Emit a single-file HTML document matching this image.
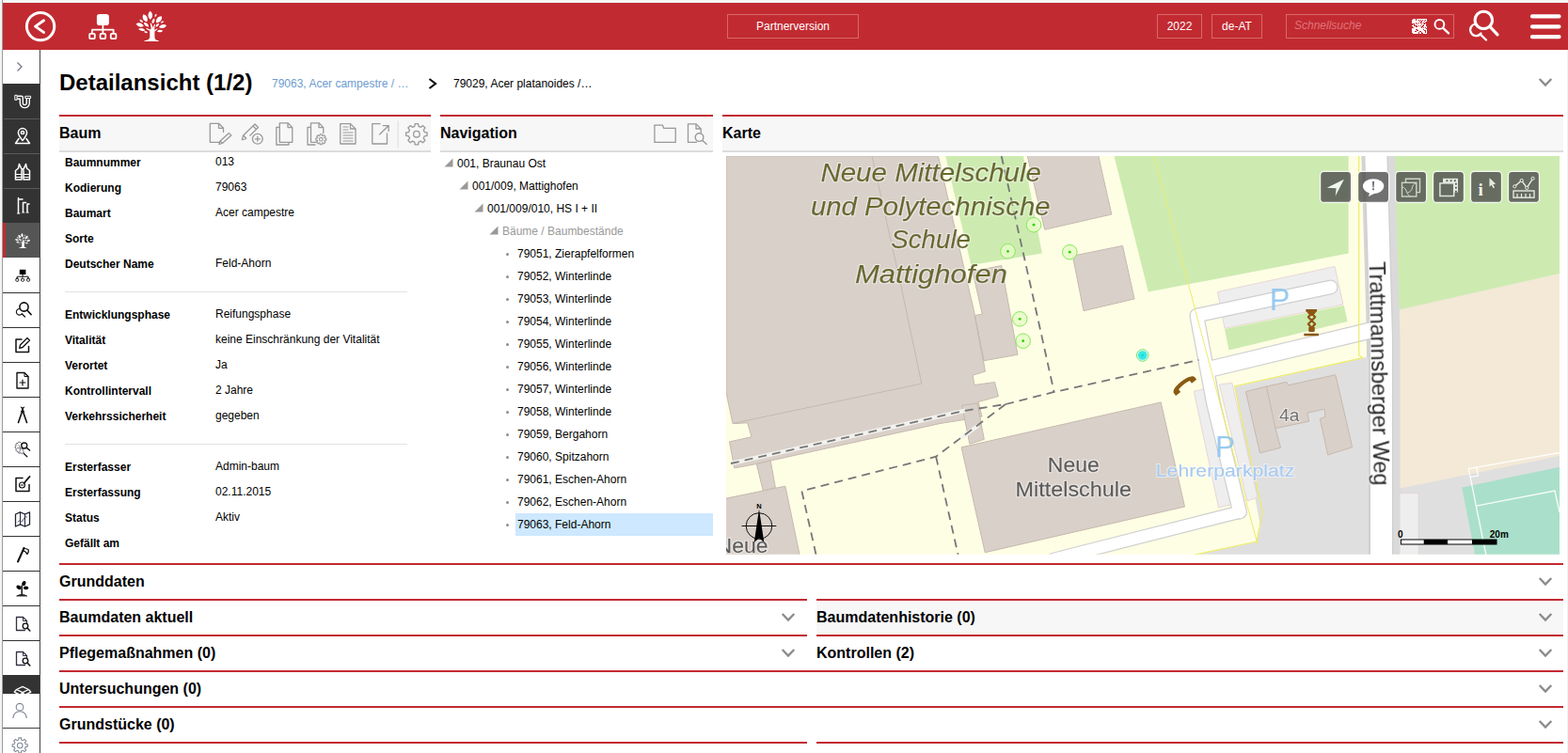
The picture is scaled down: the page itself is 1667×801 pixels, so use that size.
<!DOCTYPE html>
<html lang="de">
<head>
<meta charset="utf-8">
<title>Detailansicht</title>
<style>
*{box-sizing:border-box;margin:0;padding:0}
html,body{width:1667px;height:801px;overflow:hidden;background:#fff}
body{position:relative;font-family:"Liberation Sans",Arial,sans-serif;font-size:12px;color:#000}
.abs{position:absolute}
#edgeT{left:0;top:0;width:1667px;height:3px;background:linear-gradient(#f4f4f4,#fafafa 60%,#e6ecec)}
#edgeL{left:0;top:0;width:3px;height:801px;background:linear-gradient(90deg,#f1f1f1,#f6f6f6 60%,#9b9b9b 67%,#9b9b9b)}
#hdr{left:3px;top:3px;width:1664px;height:50px;background:#c22a31}
.hbtn{position:absolute;border:1px solid #d9686c;color:#fff;font-size:12px;text-align:center;line-height:24px;height:26px}
#side{left:3px;top:53px;width:40px;height:748px;border-right:1px solid #3a3a3a;background:#fff}
.si{position:absolute;left:0;width:39px;height:37px;border-bottom:1px solid #555}
.si.d{background:#333;border-bottom:1px solid #555}
.si.w{background:#fff;border-bottom:1px solid #333}
.si svg{position:absolute;left:0;top:0}
h1{position:absolute;left:63px;top:73px;font-size:24px;line-height:30px;font-weight:bold;white-space:nowrap}
.ph{position:absolute;height:40px;border-top:2px solid #c22a31;border-bottom:2px solid #dcdcdc;background:#f7f7f7}
.ph b{position:absolute;left:0;top:8px;font-size:16px;line-height:20px;white-space:nowrap}
.lb{position:absolute;left:69px;font-weight:bold;white-space:nowrap;line-height:14px}
.vl{position:absolute;left:229px;white-space:nowrap;line-height:14px}
.sep{position:absolute;left:69px;width:364px;height:1px;background:#e2e2e2}
.tr{position:absolute;white-space:nowrap;line-height:14px}
.acc{position:absolute;height:38px;border-top:2px solid #c22a31}
.acc b{position:absolute;left:0;top:8px;font-size:16px;line-height:20px;white-space:nowrap}
.chev{position:absolute;width:14px;height:9px}
</style>
</head>
<body>
<div id="edgeT" class="abs"></div>
<div id="hdr" class="abs">
<svg class="abs" style="left:0;top:0" width="1664" height="50" viewBox="3 3 1664 50">
<g fill="none" stroke="#fff" stroke-linecap="round" stroke-linejoin="round">
<circle cx="43.1" cy="28.1" r="14.7" stroke-width="3"/>
<path d="M46.5 21.8 L37.6 28.1 L46.5 34.4" stroke-width="3"/>
<g stroke-width="1.8" stroke-linecap="butt">
<path d="M109.4 26v9.5M98 35.5v-3.8h22.6v3.8"/>
<rect x="95.2" y="35.9" width="5.6" height="5.2" rx="0.8"/>
<rect x="106.6" y="35.9" width="5.6" height="5.2" rx="0.8"/>
<rect x="117.8" y="35.9" width="5.6" height="5.2" rx="0.8"/>
</g>
</g>
<rect x="102.9" y="15" width="13" height="12" rx="2.8" fill="#fff"/>
<!-- tree -->
<g fill="#fff">
<path d="M153.500 44 L168.800 44 L168.800 43.200 C165.500 42.800 164.500 41.500 164.400 39 L164.400 33.500 L167.500 31 L167 30.300 L164.300 32 L164.300 29 L165 26 L164 25.700 L162.800 29.500 L160.600 24.500 L159.600 24.800 L160.800 30 L159.800 31.500 L155.800 29.800 L155.400 30.700 L159.300 33 L159.300 39 C159.200 41.500 157.500 42.800 153.500 43.200 Z"/>
<path transform="translate(159.75 16.25) rotate(0)" d="M0 -4.50 C3.00 -2.02 3.00 2.02 0 4.50 C-3.00 2.02 -3.00 -2.02 0 -4.50 Z"/>
<path transform="translate(154.25 19.25) rotate(-25)" d="M0 -4.40 C3.12 -1.98 3.12 1.98 0 4.40 C-3.12 1.98 -3.12 -1.98 0 -4.40 Z"/>
<path transform="translate(169.00 20.75) rotate(40)" d="M0 -4.50 C3.12 -2.02 3.12 2.02 0 4.50 C-3.12 2.02 -3.12 -2.02 0 -4.50 Z"/>
<path transform="translate(165.50 16.50) rotate(25)" d="M0 -1.80 C1.12 -0.81 1.12 0.81 0 1.80 C-1.12 0.81 -1.12 -0.81 0 -1.80 Z"/>
<path transform="translate(163.00 22.25) rotate(20)" d="M0 -3.00 C1.75 -1.35 1.75 1.35 0 3.00 C-1.75 1.35 -1.75 -1.35 0 -3.00 Z"/>
<path transform="translate(150.25 22.25) rotate(-50)" d="M0 -2.40 C1.38 -1.08 1.38 1.08 0 2.40 C-1.38 1.08 -1.38 -1.08 0 -2.40 Z"/>
<path transform="translate(148.75 26.50) rotate(-72)" d="M0 -4.20 C2.62 -1.89 2.62 1.89 0 4.20 C-2.62 1.89 -2.62 -1.89 0 -4.20 Z"/>
<path transform="translate(155.50 26.25) rotate(-50)" d="M0 -3.40 C2.00 -1.53 2.00 1.53 0 3.40 C-2.00 1.53 -2.00 -1.53 0 -3.40 Z"/>
<path transform="translate(173.00 28.00) rotate(75)" d="M0 -4.20 C2.62 -1.89 2.62 1.89 0 4.20 C-2.62 1.89 -2.62 -1.89 0 -4.20 Z"/>
<path transform="translate(172.50 23.50) rotate(65)" d="M0 -1.80 C1.12 -0.81 1.12 0.81 0 1.80 C-1.12 0.81 -1.12 -0.81 0 -1.80 Z"/>
<path transform="translate(167.25 26.75) rotate(40)" d="M0 -2.60 C1.50 -1.17 1.50 1.17 0 2.60 C-1.50 1.17 -1.50 -1.17 0 -2.60 Z"/>
<path transform="translate(150.75 31.50) rotate(-80)" d="M0 -3.60 C1.88 -1.62 1.88 1.62 0 3.60 C-1.88 1.62 -1.88 -1.62 0 -3.60 Z"/>
<path transform="translate(170.00 33.00) rotate(85)" d="M0 -3.20 C1.75 -1.44 1.75 1.44 0 3.20 C-1.75 1.44 -1.75 -1.44 0 -3.20 Z"/>
<path transform="translate(155.00 34.25) rotate(-75)" d="M0 -2.00 C1.12 -0.90 1.12 0.90 0 2.00 C-1.12 0.90 -1.12 -0.90 0 -2.00 Z"/>
</g>
<!-- small search -->
<g fill="none" stroke="#fff" stroke-linecap="round">
<circle cx="1530.4" cy="25.900" r="4.900" stroke-width="2"/>
<path d="M1534.200 29.800 L1540 35.400" stroke-width="2.300"/>
<circle cx="1577.300" cy="21.400" r="9.200" stroke-width="3"/>
<path d="M1584 28.400 L1592 36.800" stroke-width="3.200"/>
<path d="M1568.800 25.500 A6.300 6.300 0 1 0 1574.500 35.500" stroke-width="2.200"/>
<path d="M1573.600 36.400 L1580 42.500" stroke-width="2.400"/>
<path d="M1629 17.400h28.500M1629 28.300h28.500M1629 39.200h28.500" stroke-width="4.200"/>
</g>
<!-- qr -->
<g id="qr"><rect x="1501" y="20" width="16" height="16" fill="#fff"/>
<g fill="#c22a31"><rect x="1501" y="20" width="1" height="1"/><rect x="1501" y="25" width="1" height="1"/><rect x="1501" y="26" width="1" height="1"/><rect x="1501" y="28" width="1" height="1"/><rect x="1501" y="29" width="1" height="1"/><rect x="1501" y="35" width="1" height="1"/><rect x="1502" y="25" width="1" height="1"/><rect x="1502" y="29" width="1" height="1"/><rect x="1503" y="25" width="1" height="1"/><rect x="1503" y="26" width="1" height="1"/><rect x="1503" y="27" width="1" height="1"/><rect x="1504" y="27" width="1" height="1"/><rect x="1504" y="33" width="1" height="1"/><rect x="1505" y="20" width="1" height="1"/><rect x="1505" y="21" width="1" height="1"/><rect x="1505" y="24" width="1" height="1"/><rect x="1505" y="27" width="1" height="1"/><rect x="1505" y="28" width="1" height="1"/><rect x="1505" y="31" width="1" height="1"/><rect x="1505" y="33" width="1" height="1"/><rect x="1506" y="25" width="1" height="1"/><rect x="1506" y="27" width="1" height="1"/><rect x="1506" y="28" width="1" height="1"/><rect x="1506" y="31" width="1" height="1"/><rect x="1506" y="32" width="1" height="1"/><rect x="1507" y="32" width="1" height="1"/><rect x="1508" y="21" width="1" height="1"/><rect x="1508" y="24" width="1" height="1"/><rect x="1508" y="27" width="1" height="1"/><rect x="1508" y="34" width="1" height="1"/><rect x="1508" y="35" width="1" height="1"/><rect x="1509" y="22" width="1" height="1"/><rect x="1509" y="33" width="1" height="1"/><rect x="1510" y="21" width="1" height="1"/><rect x="1510" y="23" width="1" height="1"/><rect x="1510" y="24" width="1" height="1"/><rect x="1510" y="27" width="1" height="1"/><rect x="1510" y="33" width="1" height="1"/><rect x="1511" y="22" width="1" height="1"/><rect x="1511" y="23" width="1" height="1"/><rect x="1511" y="25" width="1" height="1"/><rect x="1511" y="28" width="1" height="1"/><rect x="1511" y="29" width="1" height="1"/><rect x="1511" y="34" width="1" height="1"/><rect x="1511" y="35" width="1" height="1"/><rect x="1512" y="21" width="1" height="1"/><rect x="1512" y="27" width="1" height="1"/><rect x="1512" y="28" width="1" height="1"/><rect x="1512" y="35" width="1" height="1"/><rect x="1513" y="24" width="1" height="1"/><rect x="1513" y="26" width="1" height="1"/><rect x="1513" y="27" width="1" height="1"/><rect x="1513" y="29" width="1" height="1"/><rect x="1513" y="31" width="1" height="1"/><rect x="1514" y="22" width="1" height="1"/><rect x="1514" y="24" width="1" height="1"/><rect x="1514" y="25" width="1" height="1"/><rect x="1514" y="32" width="1" height="1"/><rect x="1515" y="21" width="1" height="1"/><rect x="1515" y="24" width="1" height="1"/><rect x="1515" y="29" width="1" height="1"/><rect x="1515" y="32" width="1" height="1"/><rect x="1515" y="33" width="1" height="1"/><rect x="1515" y="34" width="1" height="1"/><rect x="1516" y="23" width="1" height="1"/><rect x="1516" y="24" width="1" height="1"/><rect x="1516" y="25" width="1" height="1"/><rect x="1516" y="26" width="1" height="1"/><rect x="1516" y="27" width="1" height="1"/><rect x="1516" y="30" width="1" height="1"/></g></g>
</svg>
<div class="hbtn" style="left:770px;top:12px;width:140px">Partnerversion</div>
<div class="hbtn" style="left:1227px;top:12px;width:48px">2022</div>
<div class="hbtn" style="left:1285px;top:12px;width:54px">de-AT</div>
<div class="hbtn" style="left:1364px;top:12px;width:179px;text-align:left;padding-left:8px;line-height:22px;font-style:italic;color:#df7378">Schnellsuche</div>
</div>
<div id="edgeL" class="abs"></div>
<div id="edgeR" class="abs" style="left:1666px;top:53px;width:1px;height:748px;background:#f1f1f1"></div>
<div id="side" class="abs" style="display:none"></div>
<svg class="abs" style="left:0;top:53px" width="43" height="748" viewBox="0 53 43 748">
<rect x="3" y="53" width="39" height="36" fill="#fff"/>
<rect x="3" y="89" width="39" height="148" fill="#333"/>
<rect x="3" y="237" width="39" height="37" fill="#555"/>
<rect x="3" y="237" width="3" height="37" fill="#c22a31"/>
<rect x="3" y="718" width="39" height="20" fill="#333"/>
<rect x="42" y="53" width="1" height="748" fill="#444"/>
<rect x="4" y="126" width="38" height="1" fill="#5a5a5a"/>
<rect x="4" y="163" width="38" height="1" fill="#5a5a5a"/>
<rect x="4" y="200" width="38" height="1" fill="#5a5a5a"/>
<rect x="3" y="311" width="39" height="1" fill="#333"/>
<rect x="3" y="348" width="39" height="1" fill="#333"/>
<rect x="3" y="385" width="39" height="1" fill="#333"/>
<rect x="3" y="422" width="39" height="1" fill="#333"/>
<rect x="3" y="459" width="39" height="1" fill="#333"/>
<rect x="3" y="496" width="39" height="1" fill="#333"/>
<rect x="3" y="533" width="39" height="1" fill="#333"/>
<rect x="3" y="570" width="39" height="1" fill="#333"/>
<rect x="3" y="607" width="39" height="1" fill="#333"/>
<rect x="3" y="644" width="39" height="1" fill="#333"/>
<rect x="3" y="681" width="39" height="1" fill="#333"/>
<rect x="3" y="718" width="39" height="1" fill="#333"/>
<rect x="3" y="774" width="39" height="1" fill="#444"/>
<path d="M18.500 66.500 L23 71 L18.500 75.500" fill="none" stroke="#778" stroke-width="1.300"/>
<g fill="none" stroke="#fff" stroke-width="1.500" stroke-linecap="round" stroke-linejoin="round">
<g stroke-linecap="butt"><path d="M18.300 103.800H22.800V109.600A3.500 3.500 0 0 0 29.800 109.600V104.600" stroke-width="4.400"/><path d="M18.300 103.800H22.800V109.600A3.500 3.500 0 0 0 29.800 109.600V104.600" stroke="#333" stroke-width="1.600"/><rect x="15.800" y="101.300" width="2.300" height="5" fill="#333" stroke-width="1"/><rect x="26.800" y="102.300" width="5.800" height="2.200" fill="#333" stroke-width="1"/></g>
<path d="M24 149.500c-3.200-4-4.600-6.200-4.600-8.300a4.600 4.600 0 0 1 9.200 0c0 2.100-1.400 4.300-4.600 8.300z"/><circle cx="24" cy="141" r="1.600"/><path d="M20 147.500l-3.500 5h15l-3.500-5"/>
<path d="M20.500 174.500l-1 4.500-3 2.500v9.500h6.500v-9.500l1-2 1 2v9.500h6.500v-9.500l-3-2.500-1-4.500-2.500 5.500h-2z"/><path d="M16.500 185.500h6.500M16.500 188.500h6.500M25 185.500h6.500M25 188.500h6.500" stroke-width="1.100"/>
<path d="M19.500 226.500v-14.500h4.500M19.500 212v-1.500M24.500 225.500v-10h3M29 225.500v-8.500h2" /><path d="M18.500 227h2.500M23.800 226h2M28.200 226h2" stroke-width="1.200"/>
</g>
<g fill="#fff" transform="translate(16.100 248) scale(0.500) translate(-145 -12)"><path d="M153.500 44 L168.800 44 L168.800 43.200 C165.500 42.800 164.500 41.500 164.400 39 L164.400 33.500 L167.500 31 L167 30.300 L164.300 32 L164.300 29 L165 26 L164 25.700 L162.800 29.500 L160.600 24.500 L159.600 24.800 L160.800 30 L159.800 31.500 L155.800 29.800 L155.400 30.700 L159.300 33 L159.300 39 C159.200 41.500 157.500 42.800 153.500 43.200 Z"/><path transform="translate(159.75 16.25) rotate(0)" d="M0 -4.50 C3.00 -2.02 3.00 2.02 0 4.50 C-3.00 2.02 -3.00 -2.02 0 -4.50 Z"/><path transform="translate(154.25 19.25) rotate(-25)" d="M0 -4.40 C3.12 -1.98 3.12 1.98 0 4.40 C-3.12 1.98 -3.12 -1.98 0 -4.40 Z"/><path transform="translate(169.00 20.75) rotate(40)" d="M0 -4.50 C3.12 -2.02 3.12 2.02 0 4.50 C-3.12 2.02 -3.12 -2.02 0 -4.50 Z"/><path transform="translate(165.50 16.50) rotate(25)" d="M0 -1.80 C1.12 -0.81 1.12 0.81 0 1.80 C-1.12 0.81 -1.12 -0.81 0 -1.80 Z"/><path transform="translate(163.00 22.25) rotate(20)" d="M0 -3.00 C1.75 -1.35 1.75 1.35 0 3.00 C-1.75 1.35 -1.75 -1.35 0 -3.00 Z"/><path transform="translate(150.25 22.25) rotate(-50)" d="M0 -2.40 C1.38 -1.08 1.38 1.08 0 2.40 C-1.38 1.08 -1.38 -1.08 0 -2.40 Z"/><path transform="translate(148.75 26.50) rotate(-72)" d="M0 -4.20 C2.62 -1.89 2.62 1.89 0 4.20 C-2.62 1.89 -2.62 -1.89 0 -4.20 Z"/><path transform="translate(155.50 26.25) rotate(-50)" d="M0 -3.40 C2.00 -1.53 2.00 1.53 0 3.40 C-2.00 1.53 -2.00 -1.53 0 -3.40 Z"/><path transform="translate(173.00 28.00) rotate(75)" d="M0 -4.20 C2.62 -1.89 2.62 1.89 0 4.20 C-2.62 1.89 -2.62 -1.89 0 -4.20 Z"/><path transform="translate(172.50 23.50) rotate(65)" d="M0 -1.80 C1.12 -0.81 1.12 0.81 0 1.80 C-1.12 0.81 -1.12 -0.81 0 -1.80 Z"/><path transform="translate(167.25 26.75) rotate(40)" d="M0 -2.60 C1.50 -1.17 1.50 1.17 0 2.60 C-1.50 1.17 -1.50 -1.17 0 -2.60 Z"/><path transform="translate(150.75 31.50) rotate(-80)" d="M0 -3.60 C1.88 -1.62 1.88 1.62 0 3.60 C-1.88 1.62 -1.88 -1.62 0 -3.60 Z"/><path transform="translate(170.00 33.00) rotate(85)" d="M0 -3.20 C1.75 -1.44 1.75 1.44 0 3.20 C-1.75 1.44 -1.75 -1.44 0 -3.20 Z"/><path transform="translate(155.00 34.25) rotate(-75)" d="M0 -2.00 C1.12 -0.90 1.12 0.90 0 2.00 C-1.12 0.90 -1.12 -0.90 0 -2.00 Z"/></g>
<g fill="none" stroke="#111" stroke-width="1.400" stroke-linecap="round" stroke-linejoin="round">
<rect x="20.800" y="286.800" width="6.600" height="5.200" fill="#000" stroke="none"/><path d="M24.100 292v2.200M18.300 296.200v-2h11.800v2" stroke-width="1"/><rect x="16.800" y="296.200" width="3" height="3" rx="0.800" stroke-width="0.900"/><rect x="22.600" y="296.200" width="3" height="3" rx="0.800" stroke-width="0.900"/><rect x="28.600" y="296.200" width="3" height="3" rx="0.800" stroke-width="0.900"/>
<circle cx="25.500" cy="326.500" r="4.600" stroke-width="1.600"/><path d="M28.800 330l4.200 4.500" stroke-width="1.800"/><path d="M20.500 328.500a3.300 3.300 0 1 0 3 5" stroke-width="1.100"/><path d="M23.500 334l3 3" stroke-width="1.200"/>
<path d="M23 361h-6v13.500h13.500v-6" stroke-width="1.500"/><path d="M29 359.500l2.500 2.500-7.500 7.500-3.300.8.800-3.300z" stroke-width="1.300"/>
<path d="M18 396.500h8l4 4v12.500h-12z" stroke-width="1.400"/><path d="M26 396.500v4h4" stroke-width="1"/><path d="M24 404v6M21 407h6" stroke-width="1.200"/>
<path d="M24 433.500v3M24 436.500l-4.500 13M24 436.500l4.500 13" stroke-width="1.600"/><path d="M22.300 433l3.400 5M25.700 433l-3.400 5" stroke-width="1"/>
<g stroke="#4a4a55" stroke-width="0.900"><path d="M22.500 471.200c-.8-1.500-3-1.500-3.600.2-1.700-.2-2.600 1.400-1.800 2.700-1.400.8-1.300 2.800.2 3.300-.9 1.300 0 3 1.600 2.900.1 1.500 1.800 2.300 3 1.400 1 1.100 2.700.9 3.300-.3"/><path d="M20 473.500l1.800 3.500-1 3.500M22.500 472.500l1 4 1.700 4.500M18.500 476.500l3.300.5 3 .3" stroke-width="0.700"/></g><circle cx="25.800" cy="474" r="3" stroke-width="1.300" fill="#fff"/><path d="M28 476.200l3.600 2.800" stroke-width="1.500"/><path d="M25.400 482.500l3.400 3.300" stroke-width="1.200"/>
<path d="M24 508.500h-7v14h14v-7" stroke-width="1.500"/><circle cx="23.500" cy="516" r="3" stroke-width="1.100"/><path d="M22.200 516h2.600" stroke-width="1"/><path d="M25.500 514l6-7" stroke-width="1.800"/>
<path d="M16.500 547l5-2.200 5 2.200 5-2.200v13l-5 2.200-5-2.200-5 2.200z" stroke-width="1.300" stroke="#223"/><path d="M21.500 545v13M26.500 547v13" stroke-width="1" stroke="#223"/><path d="M19 555c2-3 3 2 5-1s2-5 4.500-4" stroke-width="0.900" stroke="#335"/>
<path d="M19 597.500l6.500-14.500" stroke-width="2"/><path d="M25 583l5 1.500c.8 1.800.3 3.500-1.200 5-.6-2-1.800-3-4.500-3.800z" stroke-width="1.200"/>
<path d="M23.200 632.500v-9.500" stroke-width="1.500"/><path d="M18 633.800c2.500-1.600 8-1.600 10.400 0z" fill="#000" stroke-width="0.800"/><g fill="#000" stroke="none"><ellipse cx="25.400" cy="620.600" rx="2" ry="2.700" transform="rotate(22 25.400 620.600)"/><ellipse cx="20" cy="624.800" rx="2.800" ry="2" transform="rotate(32 20 624.800)"/><ellipse cx="27.600" cy="625.400" rx="2.700" ry="1.800"/></g>
<path d="M26.500 670.500h-9v-14h7l4 4v3" stroke-width="1.300" stroke="#334"/><path d="M24.500 656.500v4h4" stroke-width="1" stroke="#334"/><circle cx="27" cy="666" r="2.800" stroke-width="1.300"/><path d="M29 668l2.800 3" stroke-width="1.500"/>
<path d="M26.500 707.500h-9v-14h7l4 4v3" stroke-width="1.300" stroke="#334"/><path d="M24.500 693.500v4h4" stroke-width="1" stroke="#334"/><circle cx="27" cy="703" r="2.800" stroke-width="1.300"/><path d="M29 705l2.800 3" stroke-width="1.500"/>
</g>
<g fill="none" stroke="#fff" stroke-width="1.300" stroke-linejoin="round"><path d="M17.500 733.500l6.500-3.200 6.500 3.200-6.500 3.200zM17.500 733.500l-2.300 2.600 6.500 3.200 2.300-2.600M30.500 733.500l2.300 2.600-6.500 3.200-2.300-2.600"/></g>
<rect x="3" y="738" width="39" height="36" fill="#fff"/>
<g fill="none" stroke="#7d8594" stroke-width="1.100"><circle cx="21" cy="752.200" r="3.800"/><path d="M13.900 764c.5-5 3.300-7.300 7.100-7.300s6.800 2.300 7.300 7.300"/></g>
<g fill="none" stroke="#858c9a" stroke-width="1.100" stroke-linejoin="round" transform="translate(-0.300 1)"><path d="M29.6 790.7 L29.6 793.3 L27.5 793.4 L26.8 795.3 L28.1 796.8 L26.3 798.6 L24.8 797.3 L22.9 798.0 L22.8 800.1 L20.2 800.1 L20.1 798.0 L18.2 797.3 L16.7 798.6 L14.9 796.8 L16.2 795.3 L15.5 793.4 L13.4 793.3 L13.4 790.7 L15.5 790.6 L16.2 788.7 L14.9 787.2 L16.7 785.4 L18.2 786.7 L20.1 786.0 L20.2 783.9 L22.8 783.9 L22.9 786.0 L24.8 786.7 L26.3 785.4 L28.1 787.2 L26.8 788.7 L27.5 790.6Z"/><circle cx="21.500" cy="792" r="2.800"/></g>
</svg>
<h1>Detailansicht (1/2)</h1>
<div class="abs" style="left:289px;top:82px;color:#6d9bd1;white-space:nowrap;line-height:14px">79063, Acer campestre / …</div>
<svg class="abs" style="left:454px;top:82px" width="12" height="14"><path d="M2.500 2 L9 7 L2.500 12" fill="none" stroke="#111" stroke-width="2.200"/></svg>
<div class="abs" style="left:482px;top:82px;white-space:nowrap;line-height:14px">79029, Acer platanoides /…</div>
<svg class="abs" style="left:1635px;top:82px" width="16" height="12" viewBox="0 0 16 12"><path d="M1.700 2 L8 8.600 L14.300 2" fill="none" stroke="#8a8a8a" stroke-width="2.300"/></svg>
<div class="ph" style="left:63px;top:122px;width:395px"><b>Baum</b></div>
<div class="ph" style="left:468px;top:122px;width:290px"><b>Navigation</b></div>
<div class="ph" style="left:768px;top:122px;width:894px"><b>Karte</b></div>
<div class="lb" style="top:166px">Baumnummer</div>
<div class="vl" style="top:165px">013</div>
<div class="lb" style="top:193px">Kodierung</div>
<div class="vl" style="top:192px">79063</div>
<div class="lb" style="top:220px">Baumart</div>
<div class="vl" style="top:219px">Acer campestre</div>
<div class="lb" style="top:247px">Sorte</div>
<div class="lb" style="top:274px">Deutscher Name</div>
<div class="vl" style="top:273px">Feld-Ahorn</div>
<div class="lb" style="top:328px">Entwicklungsphase</div>
<div class="vl" style="top:327px">Reifungsphase</div>
<div class="lb" style="top:355px">Vitalität</div>
<div class="vl" style="top:354px">keine Einschränkung der Vitalität</div>
<div class="lb" style="top:382px">Verortet</div>
<div class="vl" style="top:381px">Ja</div>
<div class="lb" style="top:409px">Kontrollintervall</div>
<div class="vl" style="top:408px">2 Jahre</div>
<div class="lb" style="top:436px">Verkehrssicherheit</div>
<div class="vl" style="top:435px">gegeben</div>
<div class="lb" style="top:490px">Ersterfasser</div>
<div class="vl" style="top:489px">Admin-baum</div>
<div class="lb" style="top:517px">Ersterfassung</div>
<div class="vl" style="top:516px">02.11.2015</div>
<div class="lb" style="top:544px">Status</div>
<div class="vl" style="top:543px">Aktiv</div>
<div class="lb" style="top:571px">Gefällt am</div>
<div class="sep" style="top:310px"></div><div class="sep" style="top:472px"></div>
<svg class="abs" style="left:472px;top:168px" width="10" height="10"><path d="M0.500 9.500 L9.500 0.500 V9.500Z" fill="#999"/></svg>
<div class="tr" style="left:486px;top:167px">001, Braunau Ost</div>
<svg class="abs" style="left:488px;top:192px" width="10" height="10"><path d="M0.500 9.500 L9.500 0.500 V9.500Z" fill="#999"/></svg>
<div class="tr" style="left:502px;top:191px">001/009, Mattighofen</div>
<svg class="abs" style="left:504px;top:216px" width="10" height="10"><path d="M0.500 9.500 L9.500 0.500 V9.500Z" fill="#999"/></svg>
<div class="tr" style="left:518px;top:215px">001/009/010, HS I + II</div>
<svg class="abs" style="left:520px;top:240px" width="10" height="10"><path d="M0.500 9.500 L9.500 0.500 V9.500Z" fill="#999"/></svg>
<div class="tr" style="left:534px;top:239px;color:#999">Bäume / Baumbestände</div>
<div class="abs" style="left:548px;top:546px;width:210px;height:24px;background:#cde8ff"></div>
<div class="abs" style="left:538px;top:269px;width:3px;height:3px;border-radius:2px;background:#8e8e8e"></div>
<div class="tr" style="left:550px;top:263px">79051, Zierapfelformen</div>
<div class="abs" style="left:538px;top:293px;width:3px;height:3px;border-radius:2px;background:#8e8e8e"></div>
<div class="tr" style="left:550px;top:287px">79052, Winterlinde</div>
<div class="abs" style="left:538px;top:317px;width:3px;height:3px;border-radius:2px;background:#8e8e8e"></div>
<div class="tr" style="left:550px;top:311px">79053, Winterlinde</div>
<div class="abs" style="left:538px;top:341px;width:3px;height:3px;border-radius:2px;background:#8e8e8e"></div>
<div class="tr" style="left:550px;top:335px">79054, Winterlinde</div>
<div class="abs" style="left:538px;top:365px;width:3px;height:3px;border-radius:2px;background:#8e8e8e"></div>
<div class="tr" style="left:550px;top:359px">79055, Winterlinde</div>
<div class="abs" style="left:538px;top:389px;width:3px;height:3px;border-radius:2px;background:#8e8e8e"></div>
<div class="tr" style="left:550px;top:383px">79056, Winterlinde</div>
<div class="abs" style="left:538px;top:413px;width:3px;height:3px;border-radius:2px;background:#8e8e8e"></div>
<div class="tr" style="left:550px;top:407px">79057, Winterlinde</div>
<div class="abs" style="left:538px;top:437px;width:3px;height:3px;border-radius:2px;background:#8e8e8e"></div>
<div class="tr" style="left:550px;top:431px">79058, Winterlinde</div>
<div class="abs" style="left:538px;top:461px;width:3px;height:3px;border-radius:2px;background:#8e8e8e"></div>
<div class="tr" style="left:550px;top:455px">79059, Bergahorn</div>
<div class="abs" style="left:538px;top:485px;width:3px;height:3px;border-radius:2px;background:#8e8e8e"></div>
<div class="tr" style="left:550px;top:479px">79060, Spitzahorn</div>
<div class="abs" style="left:538px;top:509px;width:3px;height:3px;border-radius:2px;background:#8e8e8e"></div>
<div class="tr" style="left:550px;top:503px">79061, Eschen-Ahorn</div>
<div class="abs" style="left:538px;top:533px;width:3px;height:3px;border-radius:2px;background:#8e8e8e"></div>
<div class="tr" style="left:550px;top:527px">79062, Eschen-Ahorn</div>
<div class="abs" style="left:538px;top:557px;width:3px;height:3px;border-radius:2px;background:#8e8e8e"></div>
<div class="tr" style="left:550px;top:551px">79063, Feld-Ahorn</div>
<div class="acc" style="left:63px;top:599px;width:1599px"><b>Grunddaten</b></div>
<svg class="abs" style="left:1635px;top:613px" width="16" height="12" viewBox="0 0 16 12"><path d="M1.700 2 L8 8.600 L14.300 2" fill="none" stroke="#8a8a8a" stroke-width="2.300"/></svg>
<div class="acc" style="left:63px;top:637px;width:795px"><b>Baumdaten aktuell</b></div>
<svg class="abs" style="left:830px;top:651px" width="16" height="12" viewBox="0 0 16 12"><path d="M1.700 2 L8 8.600 L14.300 2" fill="none" stroke="#8a8a8a" stroke-width="2.300"/></svg>
<div class="acc" style="left:868px;top:637px;width:794px;background:#f7f7f7"><b>Baumdatenhistorie (0)</b></div>
<svg class="abs" style="left:1635px;top:651px" width="16" height="12" viewBox="0 0 16 12"><path d="M1.700 2 L8 8.600 L14.300 2" fill="none" stroke="#8a8a8a" stroke-width="2.300"/></svg>
<div class="acc" style="left:63px;top:675px;width:795px"><b>Pflegemaßnahmen (0)</b></div>
<svg class="abs" style="left:830px;top:689px" width="16" height="12" viewBox="0 0 16 12"><path d="M1.700 2 L8 8.600 L14.300 2" fill="none" stroke="#8a8a8a" stroke-width="2.300"/></svg>
<div class="acc" style="left:868px;top:675px;width:794px"><b>Kontrollen (2)</b></div>
<svg class="abs" style="left:1635px;top:689px" width="16" height="12" viewBox="0 0 16 12"><path d="M1.700 2 L8 8.600 L14.300 2" fill="none" stroke="#8a8a8a" stroke-width="2.300"/></svg>
<div class="acc" style="left:63px;top:713px;width:1599px"><b>Untersuchungen (0)</b></div>
<svg class="abs" style="left:1635px;top:727px" width="16" height="12" viewBox="0 0 16 12"><path d="M1.700 2 L8 8.600 L14.300 2" fill="none" stroke="#8a8a8a" stroke-width="2.300"/></svg>
<div class="acc" style="left:63px;top:751px;width:1599px"><b>Grundstücke (0)</b></div>
<svg class="abs" style="left:1635px;top:765px" width="16" height="12" viewBox="0 0 16 12"><path d="M1.700 2 L8 8.600 L14.300 2" fill="none" stroke="#8a8a8a" stroke-width="2.300"/></svg>
<div class="acc" style="left:63px;top:789px;width:795px;height:12px"></div>
<div class="acc" style="left:868px;top:789px;width:794px;height:12px"></div>
<svg class="abs" style="left:215px;top:124px" width="250" height="36" viewBox="215 124 250 36">
<g fill="none" stroke="#999" stroke-width="1.300" stroke-linejoin="round">
<path d="M236 151.300H223.300V131.300H232.500L237.500 136.300V141"/><path d="M232.500 131.300V136.300H237.500"/>
<path d="M243.500 141.600l2.300 2.300-9.500 8.600-3.300 1 .8-3.200z" fill="#f7f7f7"/><path d="M234 150l2.200 2.300"/>
<path d="M257.200 149l1.500-5 12.300-12 3.500 3.500-9 9M258.700 144l3.500 3.500M269 134l3.500 3.500M257.200 149l4.500-1.500"/>
<circle cx="273.800" cy="147.800" r="5.400" fill="#f7f7f7"/><path d="M273.800 144.800v6M270.800 147.800h6"/>
<path d="M297.300 151.300V130.800H306L310.800 135.600V151.300Z"/><path d="M306 130.800V135.600H310.800"/><path d="M297.300 135.300H293.800V154H307V151.300"/>
<path d="M337 151.300H330.500V130.800H339L343.800 135.600V142"/><path d="M339 130.800V135.600H343.800"/><path d="M330.500 135.300H327V154H335.500"/>
<path d="M346.79 147.09 L346.79 149.31 L345.24 149.33 L344.89 150.19 L345.97 151.29 L344.39 152.87 L343.29 151.79 L342.43 152.14 L342.41 153.69 L340.19 153.69 L340.17 152.14 L339.31 151.79 L338.21 152.87 L336.63 151.29 L337.71 150.19 L337.36 149.33 L335.81 149.31 L335.81 147.09 L337.36 147.07 L337.71 146.21 L336.63 145.11 L338.21 143.53 L339.31 144.61 L340.17 144.26 L340.19 142.71 L342.41 142.71 L342.43 144.26 L343.29 144.61 L344.39 143.53 L345.97 145.11 L344.89 146.21 L345.24 147.07Z" stroke-width="1.100" fill="#f7f7f7"/><circle cx="341.300" cy="148.200" r="1.800" stroke-width="1.100"/>
<path d="M361.800 153V131.600H372.500L378 137V153Z"/><path d="M372.500 131.600V137H378"/><path d="M364.500 135h6M364.500 138h6M364.500 141h11M364.500 144h11M364.500 147h11M364.500 150h11" stroke-width="1"/>
<path d="M404.500 131.600H395.800V153H411.500V141.500"/><path d="M403.300 143.300L412.800 134M406.800 133.600H413.200V140"/>
</g>
<rect x="422.600" y="128.500" width="1" height="29" fill="#ddd"/>
<g fill="none" stroke="#999" stroke-width="1.300" stroke-linejoin="round"><path d="M454.07 141.01 L454.07 144.39 L451.23 144.83 L450.30 147.09 L451.99 149.41 L449.61 151.79 L447.29 150.10 L445.03 151.03 L444.59 153.87 L441.21 153.87 L440.77 151.03 L438.51 150.10 L436.19 151.79 L433.81 149.41 L435.50 147.09 L434.57 144.83 L431.73 144.39 L431.73 141.01 L434.57 140.57 L435.50 138.31 L433.81 135.99 L436.19 133.61 L438.51 135.30 L440.77 134.37 L441.21 131.53 L444.59 131.53 L445.03 134.37 L447.29 135.30 L449.61 133.61 L451.99 135.99 L450.30 138.31 L451.23 140.57Z"/><circle cx="442.900" cy="142.700" r="3.300"/></g>
</svg>
<svg class="abs" style="left:680px;top:124px" width="80" height="36" viewBox="680 124 80 36">
<g fill="none" stroke="#999" stroke-width="1.300" stroke-linejoin="miter">
<path d="M695.900 151.300V133.100H704.400L705.600 136.300H718.200V151.300Z"/>
<path d="M741 151.300H731.500V131.800H740L745.200 137V141.500"/><path d="M740 131.800V137H745.200"/>
<circle cx="743.500" cy="146.100" r="4.300" stroke-width="1.400"/><path d="M746.600 149.200L751.600 153.800" stroke-width="1.400"/>
</g></svg>
<!--MAPSTART-->
<svg class="abs" style="left:772px;top:166px" width="886" height="424" viewBox="772 166 886 424">
<defs><filter id="bl" x="-5%" y="-5%" width="110%" height="110%"><feGaussianBlur stdDeviation="0.6"/></filter><filter id="bl2"><feGaussianBlur stdDeviation="0.9"/></filter><filter id="ha" x="-10%" y="-30%" width="120%" height="160%"><feMorphology in="SourceAlpha" operator="dilate" radius="1.1" result="d"/><feGaussianBlur in="d" stdDeviation="0.6" result="db"/><feFlood flood-color="#fff" flood-opacity="0.5"/><feComposite in2="db" operator="in" result="h"/><feGaussianBlur in="SourceGraphic" stdDeviation="0.5" result="sg"/><feMerge><feMergeNode in="h"/><feMergeNode in="sg"/></feMerge></filter></defs>
<clipPath id="mc"><rect x="772" y="166" width="886" height="423.7"/></clipPath><g clip-path="url(#mc)">
<rect x="772" y="166" width="886" height="424" fill="#fefee5"/>
<g filter="url(#bl)">
<polygon points="1312.5,411.5 1448.6,381.0 1460.0,378.0 1460.0,592.0 1262.0,592.0 1336.0,576.5 1340.0,560.0" fill="#e0dfdf" />
<polygon points="1482.0,330.0 1658.0,291.0 1658.0,592.0 1482.0,592.0" fill="#e0dfdf" />
<polygon points="1487.5,329.4 1658.0,291.0 1658.0,485.0 1489.4,519.3 1487.5,519.3" fill="#f3e9d6" />
<polygon points="1005.3,166.0 1088.0,166.0 1107.9,269.5 1032.3,282.0" fill="#cdebb0" />
<polygon points="1184.5,166.0 1433.6,166.0 1433.6,269.5 1220.8,310.5" fill="#cdebb0" />
<polygon points="1482.0,166.0 1658.0,166.0 1658.0,291.0 1482.0,330.5" fill="#cdebb0" />
<polygon points="1302.0,350.0 1428.8,324.9 1432.5,342.0 1306.5,372.6" fill="#cdebb0" />
<polygon points="1554.2,518.4 1658.0,496.8 1658.0,592.0 1568.5,592.0" fill="#aae0cb" />
<polyline points="1658.0,481.5 1561.3,498.6 1580.2,592.0" fill="none" stroke="#fff" stroke-width="1.3" stroke-opacity="0.9"/>
<polyline points="1569.4,538.2 1653.0,522.0 1658.0,545.0" fill="none" stroke="#fff" stroke-width="1.3" stroke-opacity="0.9"/>
<polyline points="1563.2,507.5 1571.5,506.0 1569.8,497.2" fill="none" stroke="#fff" stroke-width="1.2" />
<polygon points="1294.4,310.5 1419.0,283.5 1428.0,324.0 1302.0,349.2" fill="#eeeeee" stroke="#e3cfcf" stroke-width="0.8" />
<polygon points="1269.3,416.2 1281.9,413.5 1310.0,536.4 1295.5,540.0" fill="#eeeeee" stroke="#e3cfcf" stroke-width="0.8" />
<polygon points="1296.3,409.0 1309.8,407.2 1337.0,529.2 1326.0,532.8" fill="#eeeeee" stroke="#e3cfcf" stroke-width="0.8" />
<polygon points="1481.3,524.7 1508.3,524.7 1508.3,592.0 1481.3,592.0" fill="#eeeeee" stroke="#e3cfcf" stroke-width="0.8" />
<polygon points="772.0,166.0 997.5,166.0 1036.3,334.6 1036.4,336.0 1045.5,383.8 1047.4,395.2 1034.1,399.2 1036.0,409.5 1057.6,406.5 1061.4,421.6 1040.0,427.5 1044.0,443.0 1026.0,446.3 1000.0,450.4 819.2,490.0 804.3,493.5 780.7,497.9 775.5,469.9 799.0,464.7 794.7,449.8 779.0,450.7 772.0,417.5" fill="#d9d0c9" stroke="#c6b9ae" stroke-width="1" />
<polygon points="804.3,493.5 819.2,490.0 824.4,518.8 811.3,522.3" fill="#d9d0c9" stroke="#c6b9ae" stroke-width="1" />
<polygon points="770.0,530.6 834.9,517.1 850.5,592.0 770.0,592.0" fill="#d9d0c9" stroke="#c6b9ae" stroke-width="1" />
<polygon points="1022.7,431.4 1039.0,428.8 1046.3,467.4 1030.9,472.3" fill="#d9d0c9" stroke="#c6b9ae" stroke-width="1" />
<polygon points="1034.0,288.7 1064.7,282.5 1082.0,377.3 1045.5,383.8 1036.4,335.5 1044.3,334.2" fill="#d9d0c9" stroke="#c6b9ae" stroke-width="1" />
<polygon points="1091.8,164.0 1167.4,164.0 1181.8,228.0 1110.7,244.3" fill="#d9d0c9" stroke="#c6b9ae" stroke-width="1" />
<polygon points="1140.4,272.2 1193.5,261.4 1206.0,318.0 1152.0,330.7" fill="#d9d0c9" stroke="#c6b9ae" stroke-width="1" />
<polygon points="1022.1,475.8 1234.2,427.9 1259.5,539.0 1047.2,587.7" fill="#d9d0c9" stroke="#c6b9ae" stroke-width="1" />
<polygon points="1324.4,416.6 1346.4,411.1 1367.7,406.3 1369.8,409.7 1419.9,398.7 1437.7,475.7 1411.6,483.9 1403.4,445.4 1408.9,443.4 1408.2,435.1 1389.7,439.3 1391.7,448.2 1356.0,455.7 1361.5,476.3 1339.5,481.8" fill="#d9d0c9" stroke="#c6b9ae" stroke-width="1" />
<polyline points="1346.4,411.1 1356.0,455.7" fill="none" stroke="#c6b9ae" stroke-width="1" />
<polyline points="927.0,166.0 959.2,310.0 979.8,408.1 779.2,450.4" fill="none" stroke="#c6b9ae" stroke-width="1" />
<polyline points="779.2,450.6 1024.0,400.0" fill="none" stroke="#c6b9ae" stroke-width="0.01" />
<polyline points="1036.4,336.0 1046.0,383.6" fill="none" stroke="#c6b9ae" stroke-width="1" />
<polyline points="1478.2,160.0 1484.0,360.0 1484.0,595.0" fill="none" stroke="#dadada" stroke-width="9" />
<polyline points="1450.2,160.0 1455.4,340.0 1456.0,380.0" fill="none" stroke="#d4d4d4" stroke-width="6" />
<polyline points="1456.6,378.0 1456.6,595.0" fill="none" stroke="#d0d0d0" stroke-width="3" />
<polyline points="1462.7,160.0 1468.5,360.0 1468.5,595.0" fill="none" stroke="#cfcfcf" stroke-width="25.4" stroke-linejoin="round" stroke-linecap="butt"/>
<polyline points="1414.5,305.5 1272.5,335.5 1273.5,342.0 1284.5,400.0 1290.2,430.0 1318.0,544.6" fill="none" stroke="#cfcfcf" stroke-width="15.9" stroke-linejoin="round" stroke-linecap="round"/>
<polyline points="1318.0,544.6 1149.0,587.5 1120.0,595.0" fill="none" stroke="#cfcfcf" stroke-width="14.6" stroke-linejoin="round" stroke-linecap="round"/>
<polyline points="1282.0,393.6 1458.0,351.2" fill="none" stroke="#cfcfcf" stroke-width="18.4" stroke-linejoin="round" stroke-linecap="butt"/>
<polyline points="1462.7,160.0 1468.5,360.0 1468.5,595.0" fill="none" stroke="#fff" stroke-width="23" stroke-linejoin="round" stroke-linecap="butt"/>
<polyline points="1414.5,305.5 1272.5,335.5 1273.5,342.0 1284.5,400.0 1290.2,430.0 1318.0,544.6" fill="none" stroke="#fff" stroke-width="13.5" stroke-linejoin="round" stroke-linecap="round"/>
<polyline points="1318.0,544.6 1149.0,587.5 1120.0,595.0" fill="none" stroke="#fff" stroke-width="12.2" stroke-linejoin="round" stroke-linecap="round"/>
<polyline points="1282.0,393.6 1458.0,351.2" fill="none" stroke="#fff" stroke-width="16" stroke-linejoin="round" stroke-linecap="butt"/>
<polyline points="1226.8,166.0 1265.5,310.0 1293.0,414.0 1337.0,579.0" fill="none" stroke="#ecec6a" stroke-width="1" />
<polyline points="1444.7,166.0 1444.7,378.0 1448.6,380.7 1312.5,411.0 1342.2,544.0 1336.0,576.0 1261.3,592.0" fill="none" stroke="#ecec6a" stroke-width="1.2" />
<polyline points="777.0,493.0 1026.0,436.8" fill="none" stroke="#f3f1ee" stroke-width="4.5" />
<polyline points="1040.0,452.5 1022.0,466.0" fill="none" stroke="#f3f1ee" stroke-width="4.5" />
<polyline points="777.0,493.0 1026.0,436.8 1069.0,430.0" fill="none" stroke="#777777" stroke-width="1.8" stroke-dasharray="9 6"/>
<polyline points="1064.7,166.0 1097.0,310.0 1120.6,417.0" fill="none" stroke="#777777" stroke-width="1.8" stroke-dasharray="9 6"/>
<polyline points="1069.0,430.0 1120.6,417.0 1274.4,382.9" fill="none" stroke="#777777" stroke-width="1.8" stroke-dasharray="9 6"/>
<polyline points="1069.0,430.0 995.1,485.7 852.4,522.3 868.0,592.0" fill="none" stroke="#777777" stroke-width="1.8" stroke-dasharray="9 6"/>
<polyline points="995.1,485.7 1019.0,592.0" fill="none" stroke="#777777" stroke-width="1.8" stroke-dasharray="9 6"/>
</g>
<g>
<text x="872.4" y="193.4" font-family="Liberation Sans,sans-serif" font-size="27" font-style="italic" textLength="234.6" lengthAdjust="spacingAndGlyphs" fill="#69692a" stroke="#69692a" stroke-width="0.25" filter="url(#ha)">Neue Mittelschule</text>
<text x="861.9" y="228.5" font-family="Liberation Sans,sans-serif" font-size="27" font-style="italic" textLength="254.7" lengthAdjust="spacingAndGlyphs" fill="#69692a" stroke="#69692a" stroke-width="0.25" filter="url(#ha)">und Polytechnische</text>
<text x="947.3" y="264.4" font-family="Liberation Sans,sans-serif" font-size="27" font-style="italic" textLength="84.7" lengthAdjust="spacingAndGlyphs" fill="#69692a" stroke="#69692a" stroke-width="0.25" filter="url(#ha)">Schule</text>
<text x="908.9" y="301.3" font-family="Liberation Sans,sans-serif" font-size="27" font-style="italic" textLength="162.1" lengthAdjust="spacingAndGlyphs" fill="#69692a" stroke="#69692a" stroke-width="0.25" filter="url(#ha)">Mattighofen</text>
<text x="1113.8" y="502.2" font-family="Liberation Sans,sans-serif" font-size="21.4"  textLength="54.9" lengthAdjust="spacingAndGlyphs" fill="#5a5a5a" stroke="#5a5a5a" stroke-width="0.3" filter="url(#ha)">Neue</text>
<text x="1079.6" y="528.3" font-family="Liberation Sans,sans-serif" font-size="21.4"  textLength="123.3" lengthAdjust="spacingAndGlyphs" fill="#5a5a5a" stroke="#5a5a5a" stroke-width="0.3" filter="url(#ha)">Mittelschule</text>
<text x="761.6" y="588.0" font-family="Liberation Sans,sans-serif" font-size="21.4"  textLength="55.0" lengthAdjust="spacingAndGlyphs" fill="#5a5a5a" stroke="#5a5a5a" stroke-width="0.3" filter="url(#ha)">Neue</text>
<text x="1360.1" y="447.5" font-family="Liberation Sans,sans-serif" font-size="17.5"  textLength="21.3" lengthAdjust="spacingAndGlyphs" fill="#6f6f6f" stroke="#6f6f6f" stroke-width="0.1" filter="url(#ha)">4a</text>
<text x="1228.8" y="506.5" font-family="Liberation Sans,sans-serif" font-size="17.6"  textLength="147.6" lengthAdjust="spacingAndGlyphs" fill="#a6caf1" stroke="#a6caf1" stroke-width="0.15" filter="url(#ha)">Lehrerparkplatz</text>
<text x="1349.8" y="330.3" font-family="Liberation Sans,sans-serif" font-size="32.5" fill="#8cc4f0" fill-opacity="0.9" filter="url(#bl)">P</text>
<text x="1292" y="486.4" font-family="Liberation Sans,sans-serif" font-size="31.5" fill="#8cc4f0" fill-opacity="0.9" filter="url(#bl)">P</text>
<text transform="translate(1455.8 278.5) rotate(88.82)" font-family="Liberation Sans,sans-serif" font-size="23.4" textLength="238.2" lengthAdjust="spacingAndGlyphs" fill="#262626" stroke="#262626" stroke-width="0.5" filter="url(#ha)">Trattmannsberger Weg</text>
</g>
<circle cx="1099.0" cy="239.2" r="7.8" fill="#e6fbc8" fill-opacity="0.85" stroke="#86e85a" stroke-width="1"/><circle cx="1099.0" cy="239.2" r="1.4" fill="#2fd000"/>
<circle cx="1137.3" cy="268.2" r="7.8" fill="#e6fbc8" fill-opacity="0.85" stroke="#86e85a" stroke-width="1"/><circle cx="1137.3" cy="268.2" r="1.4" fill="#2fd000"/>
<circle cx="1071.5" cy="267.3" r="7.8" fill="#e6fbc8" fill-opacity="0.85" stroke="#86e85a" stroke-width="1"/><circle cx="1071.5" cy="267.3" r="1.4" fill="#2fd000"/>
<circle cx="1084.2" cy="339.3" r="7.8" fill="#e6fbc8" fill-opacity="0.85" stroke="#86e85a" stroke-width="1"/><circle cx="1084.2" cy="339.3" r="1.4" fill="#2fd000"/>
<circle cx="1087.7" cy="362.7" r="7.8" fill="#e6fbc8" fill-opacity="0.85" stroke="#86e85a" stroke-width="1"/><circle cx="1087.7" cy="362.7" r="1.4" fill="#2fd000"/>
<circle cx="1214.700" cy="378" r="6.300" fill="#d9ffe0" stroke="#7fe07a" stroke-width="1"/><circle cx="1214.700" cy="378" r="4.800" fill="#35e8e8"/><circle cx="1214.700" cy="378" r="1.200" fill="#22cfc0"/>
<g transform="translate(1258.300 408.800) rotate(-38)" fill="#8a5a12"><path d="M-14 1.500c0-3.600 6-5.300 14-5.300s14 1.700 14 5.300v3h-6.500v-3.400c-2.500-.7-5-.9-7.500-.9s-5 .2-7.500.9v3.400h-6.500z"/></g>
<g stroke="#8d5512" fill="none" filter="url(#bl)"><path d="M1388.300 330.300h11.800M1386.300 356h15.600" stroke-width="2.500"/><path d="M1389.500 331.500h9.500l-2.500 3h-4.500z" fill="#8d5512" stroke-width="1"/><path d="M1394.500 333.500L1398.200 337.200L1394.500 341L1398.200 344.700L1394.500 348.500M1394.500 333.500L1390.800 337.200L1394.500 341L1390.800 344.700L1394.500 348.500" stroke-width="2.200" stroke-linejoin="round"/><path d="M1391.800 348h5.400v4.500h-5.400z" fill="#8d5512" stroke-width="1"/></g>
<rect x="1403.6" y="182.4" width="33" height="33" rx="4" fill="rgb(76,76,76)" fill-opacity="0.8" stroke="#fff" stroke-opacity="0.9" stroke-width="1.3"/>
<rect x="1443.6" y="182.4" width="33" height="33" rx="4" fill="rgb(76,76,76)" fill-opacity="0.8" stroke="#fff" stroke-opacity="0.9" stroke-width="1.3"/>
<rect x="1483.6" y="182.4" width="33" height="33" rx="4" fill="rgb(76,76,76)" fill-opacity="0.8" stroke="#fff" stroke-opacity="0.9" stroke-width="1.3"/>
<rect x="1523.5" y="182.4" width="33" height="33" rx="4" fill="rgb(76,76,76)" fill-opacity="0.8" stroke="#fff" stroke-opacity="0.9" stroke-width="1.3"/>
<rect x="1563.5" y="182.4" width="33" height="33" rx="4" fill="rgb(76,76,76)" fill-opacity="0.8" stroke="#fff" stroke-opacity="0.9" stroke-width="1.3"/>
<rect x="1603.5" y="182.4" width="33" height="33" rx="4" fill="rgb(76,76,76)" fill-opacity="0.8" stroke="#fff" stroke-opacity="0.9" stroke-width="1.3"/>
<polygon points="1428.9,190.7 1410.8,199.7 1420.6,200.3 1419.7,208.6" fill="#f0f7ee"/>
<ellipse cx="1460.1" cy="198.1" rx="11.2" ry="7.9" fill="#fff"/><path d="M1456.500 204.500 L1454.800 209 L1463 205Z" fill="#fff"/><path d="M1459 193h2l-.4 6.500h-1.200z" fill="#666"/><circle cx="1460" cy="201.300" r="1.100" fill="#666"/>
<g fill="none" stroke="#cfd4c6" stroke-width="1.400"><path d="M1494.500 194v-3.800h15v14.400h-3.500"/><rect x="1490.500" y="194.300" width="15.300" height="14.700"/><path d="M1490.500 199c3 .5 4 2 5 5s2.500 4.500 4.500 5M1505.800 194.500c-3 1-4 3-4.500 5.500s-2.500 4.500-5 5" stroke-width="1"/></g>
<rect x="1534" y="189.800" width="16" height="14.800" fill="#e4eadf"/><g fill="#555"><rect x="1537.5" y="191.3" width="1.8" height="1.8"/><rect x="1541.7" y="191.3" width="1.8" height="1.8"/><rect x="1545.9" y="191.3" width="1.8" height="1.8"/><rect x="1547" y="194.8" width="1.800" height="1.800"/><rect x="1547" y="198.8" width="1.800" height="1.800"/><rect x="1547" y="202.8" width="1.800" height="1.800"/></g><rect x="1530.900" y="194.900" width="14.800" height="13.600" fill="#666a60" stroke="#dfe6dc" stroke-width="1.500"/>
<text x="1571.600" y="208.200" font-family="Liberation Serif,serif" font-weight="bold" font-size="19" fill="#f0f7ee">i</text><path d="M1583.500 189.200v9.500l2.300-2 1.700 3.600 1.500-.7-1.700-3.500 3-.3z" fill="#e4eadf"/>
<g fill="none" stroke="#eef3ea" stroke-width="1.300"><path d="M1610.300 198.300L1617.700 192L1623.300 199.800L1629.600 189.800"/><rect x="1609" y="203" width="22" height="7.200"/><path d="M1613 210v-4M1617.500 210v-4M1622 210v-4M1626.500 210v-4" stroke-width="1.200"/></g><g fill="#666a60" stroke="#eef3ea" stroke-width="1"><circle cx="1610.300" cy="198.300" r="1.600"/><circle cx="1617.700" cy="192" r="1.600"/><circle cx="1623.300" cy="199.800" r="1.600"/><circle cx="1629.600" cy="189.800" r="1.600"/></g>
<g fill="none" stroke="#111" stroke-width="1"><circle cx="807" cy="559.500" r="13.800"/><path d="M788.600 559.500h36.700"/></g><path d="M807 541.500L812.300 576.800L807 572.600L801.800 576.800Z" fill="#000"/><text x="804.200" y="540.800" font-family="Liberation Sans,sans-serif" font-weight="bold" font-size="7.500" fill="#000">N</text>
<rect x="1489.400" y="574" width="101.600" height="5" fill="#fff" stroke="#000" stroke-width="1"/><rect x="1513.700" y="574" width="25.300" height="5" fill="#000"/><rect x="1565" y="574" width="26" height="5" fill="#000"/>
<text x="1486" y="572" font-family="Liberation Sans,sans-serif" font-weight="bold" font-size="10" fill="#000">0</text><text x="1583.800" y="572" font-family="Liberation Sans,sans-serif" font-weight="bold" font-size="10" fill="#000">20m</text>
</g></svg>
<!--MAPEND-->
</body>
</html>
